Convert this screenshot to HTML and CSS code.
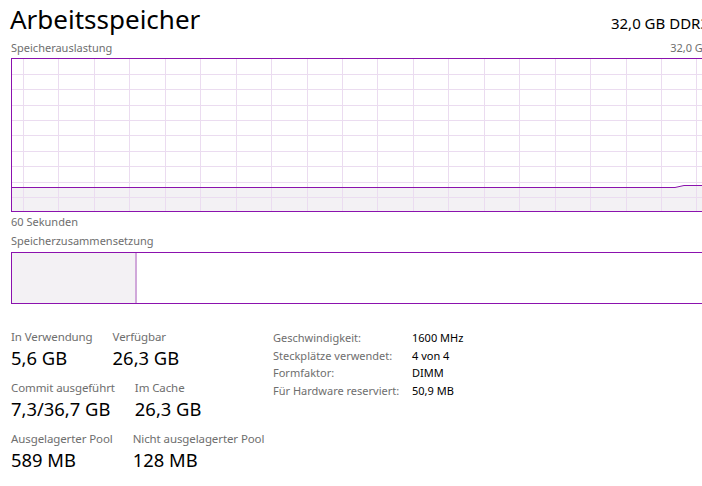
FILE: index.html
```html
<!DOCTYPE html>
<html lang="de">
<head>
<meta charset="utf-8">
<title>Arbeitsspeicher</title>
<link rel="stylesheet" href="styles.css">
</head>
<body>
<div class="page">
  <div class="head">
    <h1 class="title">Arbeitsspeicher</h1>
    <div class="type">32,0 GB DDR3</div>
  </div>
  <div class="caprow">
    <span class="cap">Speicherauslastung</span>
    <span class="cap">32,0 GB</span>
  </div>
  <svg class="graph" width="709" height="154" viewBox="0 0 709 154">
    <path class="fill" d="M0 129.5 H664 L673 127.5 H709 V154 H0 Z"/>
    <g class="grid">
      <path d="M12.5 0V154M47.5 0V154M83.5 0V154M118.5 0V154M154.5 0V154M189.5 0V154M225.5 0V154M260.5 0V154M296.5 0V154M331.5 0V154M366.5 0V154M402.5 0V154M437.5 0V154M473.5 0V154M508.5 0V154M544.5 0V154M579.5 0V154M615.5 0V154M650.5 0V154M685.5 0V154"/>
      <path d="M0 16.5H709M0 31.5H709M0 47.5H709M0 62.5H709M0 77.5H709M0 93.5H709M0 108.5H709M0 124.5H709M0 139.5H709"/>
    </g>
    <path class="line" d="M0 129.5 H664 L673 127.5 H709"/>
    <rect class="frame" x="0.5" y="0.5" width="708" height="153"/>
  </svg>
  <div class="cap secs">60 Sekunden</div>
  <div class="cap comp-cap">Speicherzusammensetzung</div>
  <div class="comp"><div class="comp-used"></div></div>

  <div class="stats">
    <div class="left">
      <div class="srow">
        <div class="stat"><div class="lbl">In Verwendung</div><div class="val">5,6 GB</div></div>
        <div class="stat"><div class="lbl">Verfügbar</div><div class="val">26,3 GB</div></div>
      </div>
      <div class="srow">
        <div class="stat"><div class="lbl">Commit ausgeführt</div><div class="val">7,3/36,7 GB</div></div>
        <div class="stat"><div class="lbl">Im Cache</div><div class="val">26,3 GB</div></div>
      </div>
      <div class="srow">
        <div class="stat"><div class="lbl">Ausgelagerter Pool</div><div class="val">589 MB</div></div>
        <div class="stat"><div class="lbl">Nicht ausgelagerter Pool</div><div class="val">128 MB</div></div>
      </div>
    </div>
    <dl class="props">
      <dt>Geschwindigkeit:</dt><dd>1600 MHz</dd>
      <dt>Steckplätze verwendet:</dt><dd>4 von 4</dd>
      <dt>Formfaktor:</dt><dd>DIMM</dd>
      <dt>Für Hardware reserviert:</dt><dd>50,9 MB</dd>
    </dl>
  </div>
</div>
</body>
</html>
```

FILE: styles.css
```css
html, body {
  margin: 0;
  padding: 0;
  background: #ffffff;
  overflow: hidden;
}
body {
  font-family: "Noto Sans", "Open Sans", sans-serif;
  color: #000000;
  width: 702px;
  height: 486px;
}
.page {
  width: 709px;
  padding-left: 11px;
  white-space: nowrap;
}
.head {
  display: flex;
  justify-content: space-between;
  align-items: baseline;
  height: 40px;
  margin-right: 11px;
}
.title {
  margin: 0;
  margin-left: -1px;
  font-size: 26px;
  font-weight: 400;
  line-height: 38px;
}
.type {
  font-size: 15px;
  line-height: 20px;
}
.caprow {
  display: flex;
  justify-content: space-between;
  height: 18px;
  margin-right: 10px;
}
.cap {
  font-size: 11px;
  line-height: 16px;
  color: #6e6e6e;
}
.graph {
  display: block;
}
.fill { fill: #f3f1f4; }
.grid path { stroke: #ebdcf0; stroke-width: 1; fill: none; }
.line { stroke: #8b12ae; stroke-width: 1; fill: none; }
.frame { stroke: #8b12ae; stroke-width: 1; fill: none; }
.secs {
  margin-top: 2px;
  height: 19px;
}
.comp-cap {
  height: 19px;
}
.comp {
  box-sizing: border-box;
  height: 52px;
  border: 1px solid #8b12ae;
  display: flex;
}
.comp-used {
  width: 123px;
  background: #f3f1f4;
  border-right: 2px solid #d0a8da;
}
.stats {
  display: grid;
  grid-template-columns: 262px auto;
  margin-top: 25px;
}
.srow {
  display: flex;
  gap: 20px;
  height: 51px;
}
.lbl {
  font-size: 11.5px;
  letter-spacing: -0.1px;
  line-height: 16px;
  color: #6e6e6e;
}
.val {
  font-size: 18.4px;
  line-height: 26px;
}
.props {
  margin: 0;
  display: grid;
  grid-template-columns: 139px auto;
  grid-auto-rows: 17.7px;
  font-size: 11px;
  line-height: 17.7px;
}
.props dt { color: #6e6e6e; }
.props dd { margin: 0; color: #000000; }
```
